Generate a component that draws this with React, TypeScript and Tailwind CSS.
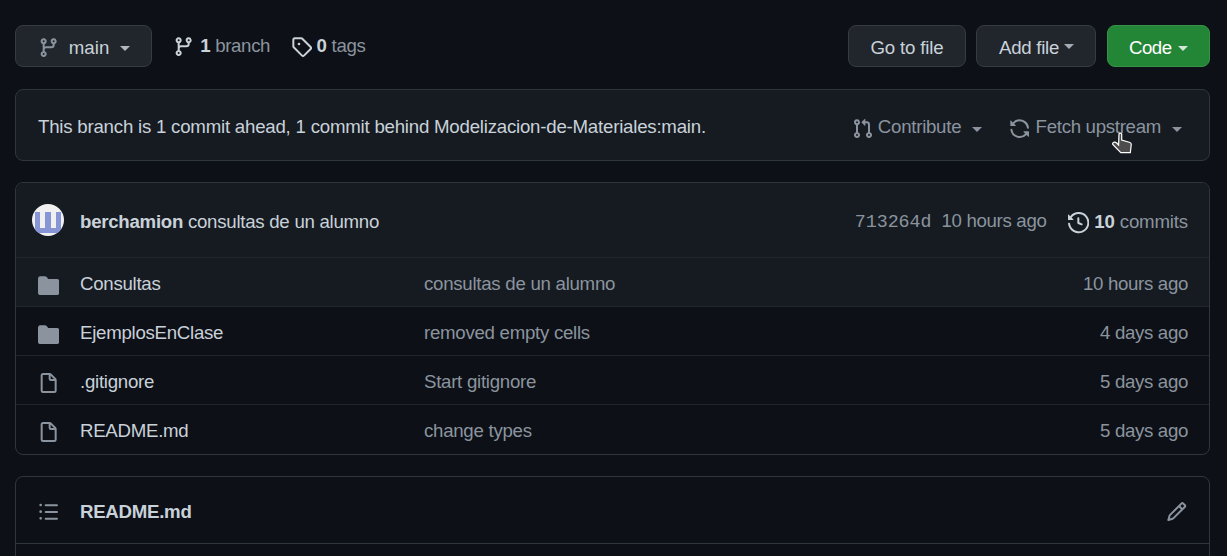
import React from "react";

const PATHS = {
  branch:
    "M11.75 2.5a.75.75 0 100 1.5.75.75 0 000-1.5zm-2.25.75a2.25 2.25 0 113 2.122V6A2.5 2.5 0 0110 8.5H6a1 1 0 00-1 1v1.128a2.251 2.251 0 11-1.5 0V5.372a2.25 2.25 0 111.5 0v1.836A2.492 2.492 0 016 7h4a1 1 0 001-1v-.628A2.25 2.25 0 019.5 3.25zM4.25 12a.75.75 0 100 1.5.75.75 0 000-1.5zM3.5 3.25a.75.75 0 111.5 0 .75.75 0 01-1.5 0z",
  tag: "M2.5 7.775V2.75a.25.25 0 01.25-.25h5.025a.25.25 0 01.177.073l6.25 6.25a.25.25 0 010 .354l-5.025 5.025a.25.25 0 01-.354 0l-6.25-6.25a.25.25 0 01-.073-.177zm-1.5 0V2.75C1 1.784 1.784 1 2.75 1h5.025c.464 0 .91.184 1.238.513l6.25 6.25a1.75 1.75 0 010 2.474l-5.026 5.026a1.75 1.75 0 01-2.474 0l-6.25-6.25A1.75 1.75 0 011 7.775zM6 5a1 1 0 100 2 1 1 0 000-2z",
  pull: "M7.177 3.073L9.573.677A.25.25 0 0110 .854v4.792a.25.25 0 01-.427.177L7.177 3.427a.25.25 0 010-.354zM3.75 2.5a.75.75 0 100 1.5.75.75 0 000-1.5zm-2.25.75a2.25 2.25 0 113 2.122v5.256a2.251 2.251 0 11-1.5 0V5.372A2.25 2.25 0 011.5 3.25zM11 2.5h-1V4h1a1 1 0 011 1v5.628a2.251 2.251 0 101.5 0V5A2.5 2.5 0 0011 2.5zm1 10.25a.75.75 0 111.5 0 .75.75 0 01-1.5 0zM3.75 12a.75.75 0 100 1.5.75.75 0 000-1.5z",
  sync: "M8 2.5a5.487 5.487 0 00-4.131 1.869l1.204 1.204A.25.25 0 014.896 6H1.25A.25.25 0 011 5.75V2.104a.25.25 0 01.427-.177l1.38 1.38A7.001 7.001 0 0114.95 7.16a.75.75 0 11-1.49.178A5.501 5.501 0 008 2.5zM1.705 8.005a.75.75 0 01.834.656 5.501 5.501 0 009.592 2.97l-1.204-1.204a.25.25 0 01.177-.427h3.646a.25.25 0 01.25.25v3.646a.25.25 0 01-.427.177l-1.38-1.38A7.001 7.001 0 011.05 8.84a.75.75 0 01.656-.834z",
  history:
    "M1.643 3.143L.427 1.927A.25.25 0 000 2.104V5.75c0 .138.112.25.25.25h3.646a.25.25 0 00.177-.427L2.715 4.215a6.5 6.5 0 11-1.18 4.458.75.75 0 10-1.493.154 8.001 8.001 0 101.6-5.684zM7.75 4a.75.75 0 01.75.75v2.992l2.028.812a.75.75 0 01-.557 1.392l-2.5-1A.75.75 0 017 8.25v-3.5A.75.75 0 017.75 4z",
  folder:
    "M1.75 1A1.75 1.75 0 000 2.75v10.5C0 14.216.784 15 1.75 15h12.5A1.75 1.75 0 0016 13.25v-8.5A1.75 1.75 0 0014.25 3h-6.5a.25.25 0 01-.2-.1l-.9-1.2c-.33-.44-.85-.7-1.4-.7h-3.5z",
  file: "M3.75 1.5a.25.25 0 00-.25.25v11.5c0 .138.112.25.25.25h8.5a.25.25 0 00.25-.25V6H9.75A1.75 1.75 0 018 4.25V1.5H3.75zm5.75.56v2.19c0 .138.112.25.25.25h2.19L9.5 2.06zM2 1.75C2 .784 2.784 0 3.75 0h5.086c.464 0 .909.184 1.237.513l3.414 3.414c.329.328.513.773.513 1.237v8.086A1.75 1.75 0 0112.25 15h-8.5A1.75 1.75 0 012 13.25V1.75z",
  list: "M2 4a1 1 0 100-2 1 1 0 000 2zm3.75-1.5a.75.75 0 000 1.5h8.5a.75.75 0 000-1.5h-8.5zm0 5a.75.75 0 000 1.5h8.5a.75.75 0 000-1.5h-8.5zm0 5a.75.75 0 000 1.5h8.5a.75.75 0 000-1.5h-8.5zM3 8a1 1 0 11-2 0 1 1 0 012 0zm-1 6a1 1 0 100-2 1 1 0 000 2z",
  pencil:
    "M11.013 1.427a1.75 1.75 0 012.474 0l1.086 1.086a1.75 1.75 0 010 2.474l-8.61 8.61c-.21.21-.47.364-.756.445l-3.251.93a.75.75 0 01-.927-.928l.929-3.25a1.75 1.75 0 01.445-.758l8.61-8.61zm1.414 1.06a.25.25 0 00-.354 0L10.811 3.75l1.439 1.44 1.263-1.263a.25.25 0 000-.354l-1.086-1.086zM11.189 6.25L9.75 4.81l-6.286 6.287a.25.25 0 00-.064.108l-.558 1.953 1.953-.558a.249.249 0 00.108-.064l6.286-6.286z",
};

function Icon({ name, className = "" }: { name: keyof typeof PATHS; className?: string }) {
  return (
    <svg viewBox="0 0 16 16" className={`size-[21.33px] shrink-0 ${className}`} fill="currentColor">
      <path fillRule="evenodd" d={PATHS[name]} />
    </svg>
  );
}

function Caret({ className = "" }: { className?: string }) {
  return (
    <svg viewBox="0 0 10 5" className={`h-[5px] w-[10px] shrink-0 ${className}`} fill="currentColor">
      <path d="M0 0h10L5 5z" />
    </svg>
  );
}

const BUTTON = "flex h-[42px] items-center rounded-lg border pt-[3px]";

const FILES: { icon: "folder" | "file"; name: string; message: string; age: string }[] = [
  { icon: "folder", name: "Consultas", message: "consultas de un alumno", age: "10 hours ago" },
  { icon: "folder", name: "EjemplosEnClase", message: "removed empty cells", age: "4 days ago" },
  { icon: "file", name: ".gitignore", message: "Start gitignore", age: "5 days ago" },
  { icon: "file", name: "README.md", message: "change types", age: "5 days ago" },
];

export default function App() {
  return (
    <div className="h-[556px] overflow-hidden whitespace-nowrap bg-[#0d1017] pl-[15px] pr-[17px] pt-[25px] font-['Liberation_Sans',sans-serif] text-[18.67px] leading-[28px] tracking-[-0.27px] text-[#c9d1d9]">
      <header className="flex h-[42px]">
        <button className={`${BUTTON} w-[137px] border-[#363b42] bg-[#21262d] pl-[22px] tracking-normal`}>
          <Icon name="branch" className="mt-px text-[#8b949e]" />
          <span className="ml-[9.5px]">main</span>
          <Caret className="ml-[11px] mt-[2px] text-[#b1b8c0]" />
        </button>
        <div className="ml-[20px] flex items-center text-[#8b949e]">
          <Icon name="branch" className="ml-px mt-px text-[#c9d1d9]" />
          <span className="ml-[6px] tracking-[-0.35px]"><b className="text-[#c9d1d9]">1</b> branch</span>
          <Icon name="tag" className="ml-[20.5px] mt-[2px] text-[#c9d1d9]" />
          <span className="ml-[4.5px]"><b className="text-[#c9d1d9]">0</b> tags</span>
        </div>
        <div className="ml-auto flex">
          <button className={`${BUTTON} w-[118px] justify-center border-[#363b42] bg-[#21262d] tracking-[-0.15px]`}>Go to file</button>
          <button className={`${BUTTON} ml-[10px] w-[120px] border-[#363b42] bg-[#21262d] pl-[22px]`}>
            Add file
            <Caret className="mb-[3px] ml-[4.5px] text-[#a5abb3]" />
          </button>
          <button className={`${BUTTON} ml-[11px] w-[103px] border-[#359446] bg-[#238636] pl-[21px] tracking-[-0.5px] text-white`}>
            Code
            <Caret className="ml-[6px] mt-[2px] text-[#d3e7d7]" />
          </button>
        </div>
      </header>

      <section className="mt-[22px] flex h-[72px] items-center rounded-lg border border-[#30363d] pb-px pl-[22px] pr-[27px] bg-[#161b22]">
        <span className="pt-[5px] tracking-[-0.222px]">
          This branch is 1 commit ahead, 1 commit behind Modelizacion-de-Materiales:main.
        </span>
        <div className="relative ml-auto flex items-center pt-[5px] text-[#8b949e]">
          <Icon name="pull" className="mt-[3px]" />
          <span className="ml-[5px]">Contribute</span>
          <Caret className="ml-[11px] mt-[4px]" />
          <Icon name="sync" className="ml-[27px] mt-[3px]" />
          <span className="ml-[5px] tracking-[-0.3px]">Fetch upstream</span>
          <Caret className="ml-[11px] mt-[4px]" />
          <svg viewBox="0 0 20 22" className="absolute right-[50px] top-[24px] h-[22px] w-[20px]">
            <path
              d="M7 1.7Q8.5 .5 9.7 2V8L18 10.5Q19.5 11 19.2 13L18.3 20.7H8.8L1 12.7Q0 11 2 10.2Q3.5 10 4.7 11L6.6 13Z"
              fill="#4d4d4d"
              stroke="#fff"
              strokeWidth="1.2"
            />
          </svg>
        </div>
      </section>

      <section className="mt-[21px] h-[273px] overflow-hidden rounded-lg border border-[#30363d]">
        <div className="flex h-[74px] items-center bg-[#161b22] pl-[16px] pr-[21px]">
          <svg viewBox="0 0 32 32" className="size-8 rounded-full">
            <path fill="#f0f0f0" d="M0 0h32v32H0z" />
            <path fill="#8794d5" d="M3 8h5v16h5V8h6v16h5V8h5v21H3z" />
          </svg>
          <span className="ml-[16px] pt-[3px]"><b>berchamion</b> consultas de un alumno</span>
          <div className="ml-auto flex items-center pt-[2px] text-[#8b949e]">
            <span className="pt-px font-['Liberation_Mono',monospace] text-[18.3px] tracking-normal">713264d</span>
            <span className="ml-[10px] tracking-[-0.33px]">10 hours ago</span>
            <Icon name="history" className="ml-[21.5px] mt-[4px] text-[#c9d1d9]" />
            <span className="ml-[5px] pt-px tracking-[-0.17px]"><b className="text-[#c9d1d9]">10</b> commits</span>
          </div>
        </div>
        {FILES.map((f, i) => (
          <div
            key={f.name}
            className={`flex h-[49px] items-center border-t border-[#21262d] pl-[22px] pr-[21px] pt-[4px] ${i === 0 ? "bg-[#161b22]" : ""}`}
          >
            <Icon name={f.icon} className="mt-[3px] text-[#8b949e]" />
            <span className="ml-[20.67px] w-[344px]">{f.name}</span>
            <span className="text-[#8b949e]">{f.message}</span>
            <span className="ml-auto tracking-[-0.33px] text-[#8b949e]">{f.age}</span>
          </div>
        ))}
      </section>

      <section className="mt-[21px] h-[100px] rounded-lg border border-[#30363d]">
        <div className="flex h-[67px] items-center border-b border-[#30363d] pl-[22px] pr-[22px] pt-[3px]">
          <Icon name="list" className="text-[#8b949e]" />
          <b className="ml-[20.67px]">README.md</b>
          <Icon name="pencil" className="ml-auto text-[#8b949e]" />
        </div>
      </section>
    </div>
  );
}
